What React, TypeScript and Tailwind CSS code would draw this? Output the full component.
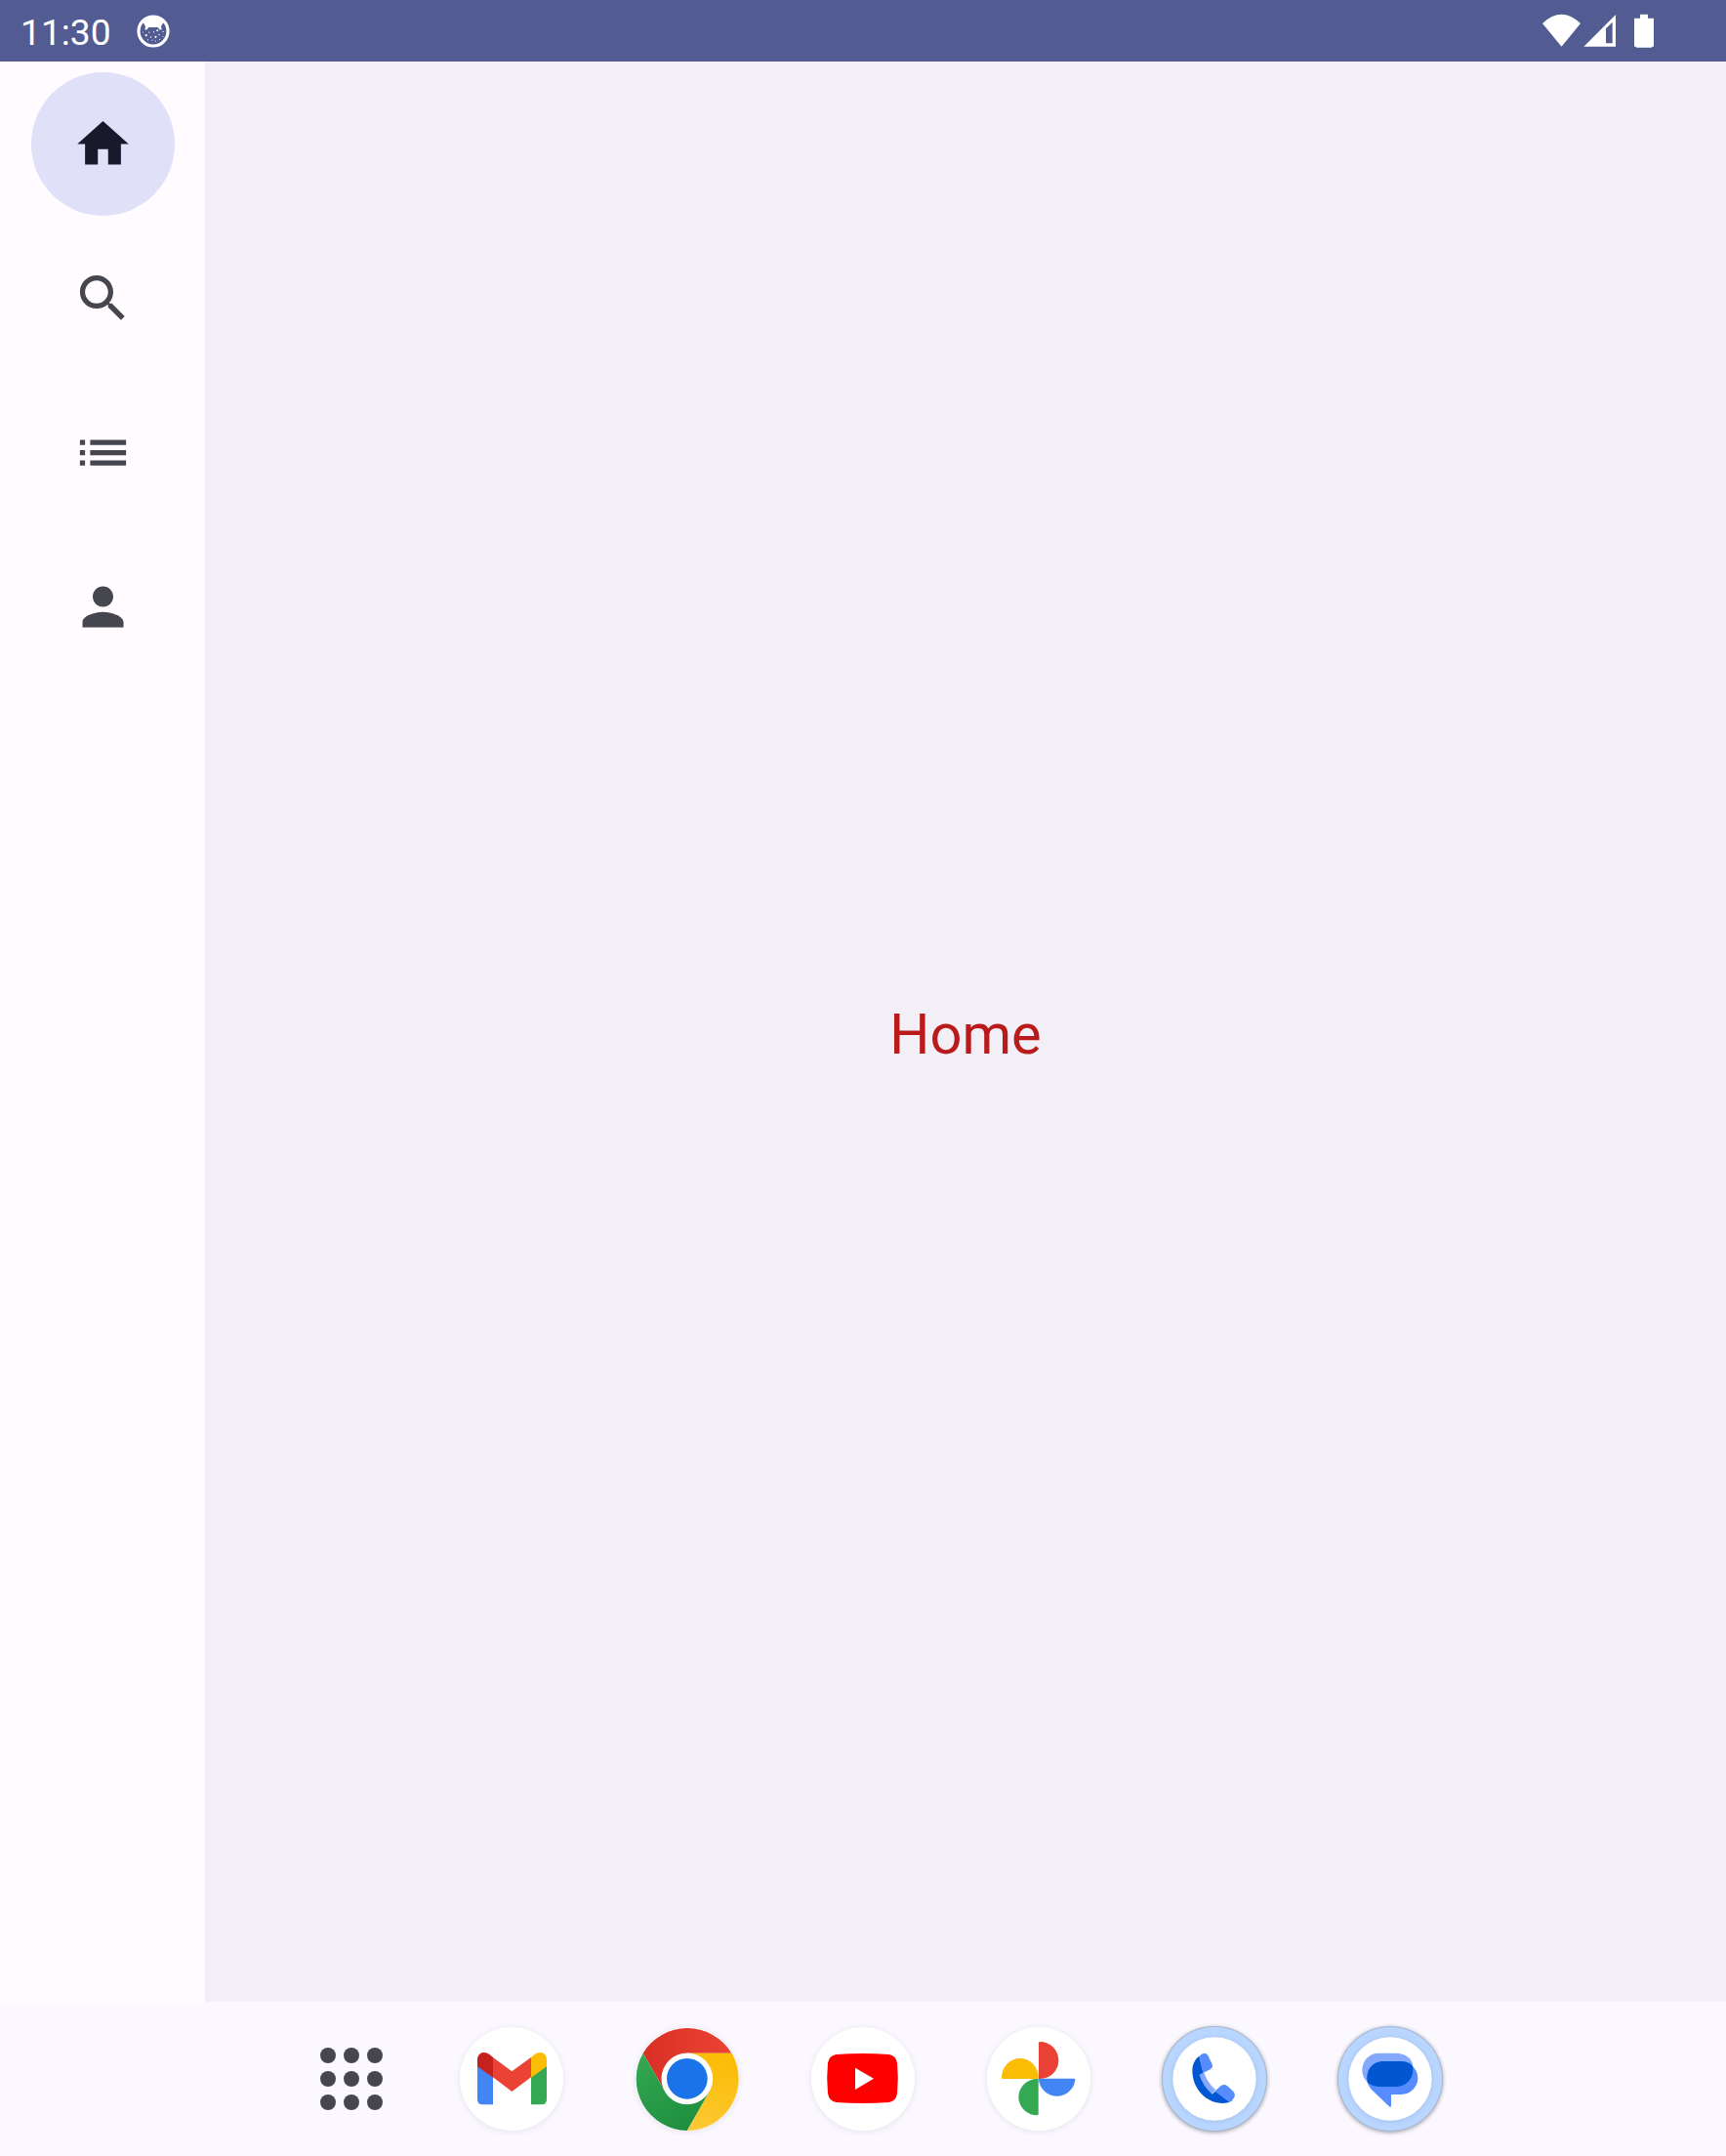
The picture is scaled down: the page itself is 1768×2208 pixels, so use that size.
import type { ReactNode } from 'react';

function StatusBar() {
  return (
    <header className="flex h-[63px] shrink-0 items-center bg-[#525b92] text-white">
      <span className="ml-[21px] mt-[4px] w-[93px] text-[37.2px] leading-none">11:30</span>
      <svg className="ml-[25px] size-9 shrink-0" viewBox="0 0 36 36">
        <circle cx="18" cy="18" r="15" fill="none" stroke="#fff" strokeWidth="3.2" />
        <path d="M18 2C10.500 2 5.500 5.600 4 12L7.700 9 10 13 9.300 16.300 11.500 16.600 13.200 14H22.800L24.500 16.600 26.700 16.300 26 13 28.300 9 32 12C30.500 5.600 25.500 2 18 2z" fill="#fff" />
        <g fill="#fff">
          <circle cx="10.700" cy="22.200" r="1.100" />
          <circle cx="20.400" cy="23.800" r="1.100" />
          <circle cx="22.200" cy="17.300" r="1" />
          <circle cx="18.500" cy="18.700" r=".6" />
          <circle cx="13.800" cy="19.200" r=".6" />
          <circle cx="15.500" cy="24" r=".7" />
          <circle cx="24" cy="21.500" r=".7" />
          <circle cx="28" cy="18.500" r=".7" />
          <circle cx="28" cy="23.500" r=".5" />
          <circle cx="12.500" cy="26.800" r=".6" />
          <circle cx="17" cy="27" r=".6" />
          <circle cx="20.500" cy="28" r=".6" />
          <circle cx="24.500" cy="26.500" r=".5" />
          <circle cx="7.500" cy="19" r=".5" />
        </g>
      </svg>
      <svg className="mr-[74px] ml-auto h-[36px] w-[114px] shrink-0" viewBox="60 40 342 108">
        <path d="M60 70Q118 15 177 70L118.500 141Z" fill="#fff" />
        <path fillRule="evenodd" d="M187 141L285 43V141ZM255 86V131H275V66Z" fill="#fff" />
        <path d="M360 42h24v12h18v87h-6v3h-48v-3h-6V54h18z" fill="#fff" />
      </svg>
    </header>
  );
}

const railItems = [
  { name: 'Home', d: 'M10 20v-6h4v6h5v-8h3L12 3 2 12h3v8z' },
  {
    name: 'Search',
    d: 'M15.500 14h-.79l-.28-.27C15.410 12.590 16 11.110 16 9.500 16 5.910 13.090 3 9.500 3S3 5.910 3 9.500 5.910 16 9.500 16c1.610 0 3.090-.59 4.230-1.570l.27.28v.79l5 4.990L20.490 19l-4.990-5zm-6 0C7.010 14 5 11.990 5 9.500S7.010 5 9.500 5 14 7.010 14 9.500 11.990 14 9.500 14z',
  },
  { name: 'List', d: 'M3 13h2v-2H3v2zm0 4h2v-2H3v2zm0-8h2V7H3v2zm4 4h14v-2H7v2zm0 4h14v-2H7v2zM7 7v2h14V7H7z' },
  {
    name: 'Profile',
    d: 'M12 12c2.210 0 4-1.790 4-4s-1.790-4-4-4-4 1.790-4 4 1.790 4 4 4zm0 2c-2.670 0-8 1.340-8 4v2h16v-2c0-2.660-5.330-4-8-4z',
  },
];

function NavRail() {
  return (
    <nav className="flex w-[210px] shrink-0 flex-col items-center gap-[11px] bg-[#fffbff] pt-[11px]">
      {railItems.map((item, i) => (
        <button
          key={item.name}
          aria-label={item.name}
          className={
            'flex size-[147px] items-center justify-center rounded-full ' +
            (i === 0 ? 'bg-[#e0e1f9] text-[#181a2c]' : 'text-[#46464f]')
          }
        >
          <svg className="size-[63px]" viewBox="0 0 24 24" fill="currentColor">
            <path d={item.d} />
          </svg>
        </button>
      ))}
    </nav>
  );
}

function DockIcon({ ringed, viewBox = '33 48 318 318', children }: { ringed?: boolean; viewBox?: string; children: ReactNode }) {
  return (
    <div
      className={
        'size-[106px] shrink-0 rounded-full ' +
        (ringed
          ? 'bg-[#b8d6ff] shadow-[0_0_0_1px_#a9b8d0,0_1px_4px_1px_rgba(0,0,0,0.35)]'
          : 'bg-white shadow-[0_1px_6px_1px_rgba(0,0,0,0.07)]')
      }
    >
      <svg className="size-full" viewBox={viewBox}>
        {children}
      </svg>
    </div>
  );
}

function InnerDisc({ id }: { id: string }) {
  return (
    <>
      <defs>
        <filter id={id} x="-20%" y="-20%" width="140%" height="140%">
          <feDropShadow dx="0" dy="2" stdDeviation="7" floodColor="#5070a0" floodOpacity="0.25" />
        </filter>
      </defs>
      <circle cx="192" cy="207" r="128" fill="#fff" filter={`url(#${id})`} />
    </>
  );
}

const dots = [0, 1, 2, 3, 4, 5, 6, 7, 8];

function Taskbar() {
  return (
    <footer className="flex h-[158px] shrink-0 items-center gap-[74px] bg-[#fbf8ff] pl-[328px]">
      <div className="mr-[5.5px] grid size-[63.500px] shrink-0 grid-cols-3 gap-[7.75px]">
        {dots.map((n) => (
          <span key={n} className="size-4 rounded-full bg-[#46464f]" />
        ))}
      </div>
      <DockIcon viewBox="513 108 318 318">
        <path d="M567 227L615 262V346H583Q567 346 567 330Z" fill="#4285f4" />
        <path d="M780 227L732 262V346H764Q780 346 780 330Z" fill="#34a853" />
        <path d="M615 201L673 244 732 201V262L673 306 615 262Z" fill="#ea4335" />
        <path d="M567 229V208C567 186 589 179 605 193L615 201V263Z" fill="#c5221f" />
        <path d="M780 229V208C780 186 758 179 742 193L732 201V263Z" fill="#fbbc04" />
      </DockIcon>
      <DockIcon>
        <defs>
          <linearGradient id="chrome-red" x1="0" x2="1">
            <stop stopColor="#d93025" />
            <stop offset="1" stopColor="#ea4335" />
          </linearGradient>
          <linearGradient id="chrome-yellow" x1=".3" y1="1" x2=".6" y2="0">
            <stop stopColor="#fcc934" />
            <stop offset="1" stopColor="#fbbc04" />
          </linearGradient>
          <linearGradient id="chrome-green" x1=".7" y1="1" x2=".1" y2="0">
            <stop stopColor="#1e8e3e" />
            <stop offset="1" stopColor="#34a853" />
          </linearGradient>
        </defs>
        <path d="M192 207L124 246 56 128A159 159 0 0 1 328 128H192Z" fill="url(#chrome-red)" />
        <path d="M192 207V128H329A159 159 0 0 1 191 366L260 246Z" fill="url(#chrome-yellow)" />
        <path d="M192 207L260 246 191 366A159 159 0 0 1 56 128L124 246Z" fill="url(#chrome-green)" />
        <circle cx="191.500" cy="206.500" r="79" fill="#fff" />
        <circle cx="191.500" cy="206.500" r="62.500" fill="#1a73e8" />
      </DockIcon>
      <DockIcon>
        <path d="M110 132Q191 126 272 132Q293 135 297 158Q302 205 297 252Q293 276 272 279Q191 285 110 279Q88 276 84 252Q79 205 84 158Q88 135 110 132Z" fill="#f00" />
        <path d="M168 173L225 206 168 240Z" fill="#fff" />
      </DockIcon>
      <DockIcon>
        <path d="M192 207V97Q192 93 196 93A57 57 0 0 1 196 207Z" fill="#ea4335" />
        <path d="M192 206H300Q304 206 304 210A56.500 58 0 0 1 192 210Z" fill="#4285f4" />
        <path d="M191 207V315Q191 319 187 319A57 56 0 0 1 187 207Z" fill="#34a853" />
        <path d="M191 207H82Q78 207 78 203A56.500 59 0 0 1 191 203Z" fill="#fbbc04" />
      </DockIcon>
      <DockIcon ringed>
        <InnerDisc id="phone-disc" />
        <path d="M146 194L160 188Q170 217 195 241L184 254Q157 229 146 194Z" fill="#85a8ff" />
        <path d="M145 137C132 147 124 163 124 181C124 237 165 282 218 282Q235 282 247 273L203 238 185 254Q157 229 146 194L158 189Z" fill="#0057d1" />
        <path d="M145 137Q162 120 172 135L184 160Q190 171 179 178L157 189Z" fill="#568cff" />
        <path d="M193 245L211 229Q221 221 232 229L250 246Q261 258 247 272Q242 278 235 277Z" fill="#568cff" />
      </DockIcon>
      <DockIcon ringed>
        <InnerDisc id="message-disc" />
        <path d="M156 128H209C237 128 261 143 262 170L124 218C112 208 106 197 106 179C106 151 128 128 156 128Z" fill="#85a8ff" />
        <path d="M261 168C271 178 277 190 277 205C277 233 254 255 226 255H195V290Q194 296 189 292L134 239Q126 231 121 216Z" fill="#568cff" />
        <path d="M170 153H226Q250 153 261 168C267 204 243 231 209 231H157Q134 230 122 217C115 180 138 153 170 153Z" fill="#0057d1" />
      </DockIcon>
    </footer>
  );
}

export default function App() {
  return (
    <div className="flex h-[2208px] w-[1768px] flex-col overflow-hidden font-['Roboto',sans-serif]">
      <StatusBar />
      <div className="flex min-h-0 flex-1">
        <NavRail />
        <main className="flex flex-1 items-center justify-center bg-[#f2eff7]">
          <h1 className="mt-[4px] text-[57.75px] leading-[68px] text-[#ba1a1a]">Home</h1>
        </main>
      </div>
      <Taskbar />
    </div>
  );
}
